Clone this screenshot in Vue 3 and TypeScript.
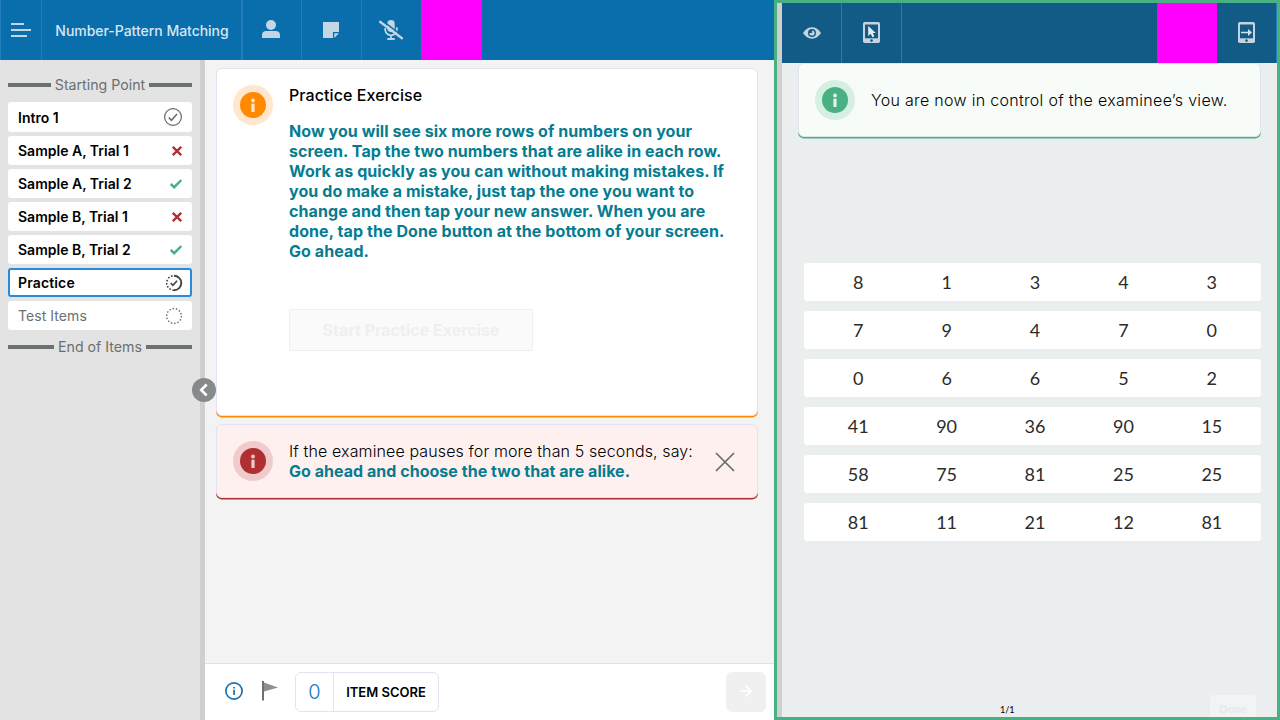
<script setup lang="ts">
interface Step {
  label: string
  state: 'done' | 'wrong' | 'right' | 'current' | 'pending'
}

const steps: Step[] = [
  { label: 'Intro 1', state: 'done' },
  { label: 'Sample A, Trial 1', state: 'wrong' },
  { label: 'Sample A, Trial 2', state: 'right' },
  { label: 'Sample B, Trial 1', state: 'wrong' },
  { label: 'Sample B, Trial 2', state: 'right' },
  { label: 'Practice', state: 'current' },
  { label: 'Test Items', state: 'pending' },
]

const script: string[] = [
  'Now you will see six more rows of numbers on your',
  'screen. Tap the two numbers that are alike in each row.',
  'Work as quickly as you can without making mistakes. If',
  'you do make a mistake, just tap the one you want to',
  'change and then tap your new answer. When you are',
  'done, tap the Done button at the bottom of your screen.',
  'Go ahead.',
]

const rows: number[][] = [
  [8, 1, 3, 4, 3],
  [7, 9, 4, 7, 0],
  [0, 6, 6, 5, 2],
  [41, 90, 36, 90, 15],
  [58, 75, 81, 25, 25],
  [81, 11, 21, 12, 81],
]
</script>

<template>
  <div class="app">
    <div class="examiner">
      <header class="bar">
        <div class="cell menu">
          <svg width="20" height="14" viewBox="0 0 20 14"><path d="M0 1h13M0 7h20M0 13h16" stroke="#c3d6e4" stroke-width="2" /></svg>
        </div>
        <div class="cell title">Number-Pattern Matching</div>
        <div class="cell tool">
          <svg width="18" height="18" viewBox="0 0 18 18" fill="#c3d6e4"><circle cx="9" cy="5" r="5" /><path d="M0 18v-2.6Q0 11 4.4 11h9.2Q18 11 18 15.400V18z" /></svg>
        </div>
        <div class="cell tool note">
          <svg width="16" height="16" viewBox="0 0 16 16" fill="#c3d6e4"><path d="M0 0h16v10h-6v6H0z" /><path d="M11.300 11.300H16L11.300 16z" /></svg>
        </div>
        <div class="cell tool mic">
          <svg width="24" height="20" viewBox="0 0 24 20" fill="none" stroke="#c3d6e4">
            <rect x="8.300" y="0" width="7.400" height="12" rx="3.700" fill="#c3d6e4" stroke="none" />
            <path d="M6.200 8v1.500a5.800 5.800 0 0 0 11.600 0V7.300M12 15v4M8.300 19h7.400" stroke-width="1.800" />
            <path d="M1.500-.8l23 17.500" stroke="#0a6eac" stroke-width="1.500" />
            <path d="M.3 1.200l23.400 17.600" stroke-width="2.300" />
          </svg>
        </div>
        <div class="mask"></div>
      </header>

      <div class="body">
        <aside class="side">
          <div class="rule start"><i></i><span>Starting Point</span><i></i></div>
          <div class="steps">
            <div v-for="s in steps" :key="s.label" class="step" :class="s.state">
              <span>{{ s.label }}</span>
              <svg v-if="s.state === 'done'" width="20" height="20" viewBox="0 0 20 20" fill="none" stroke="#666b6b"><circle cx="10" cy="10" r="8.400" stroke-width="1.200" /><path d="M5.700 10.500l2.800 2.800 5.500-6.200" stroke-width="1.500" /></svg>
              <svg v-else-if="s.state === 'wrong'" width="10" height="10" viewBox="0 0 10 10" fill="none" stroke="#b02f32" stroke-width="2.300"><path d="M.8.8l8.400 8.400M9.200.8L.8 9.200" /></svg>
              <svg v-else-if="s.state === 'right'" width="12" height="10" viewBox="0 0 12 10" fill="none" stroke="#48b083" stroke-width="2.400"><path d="M.7 4.900l3.500 3.300L11.300 1" /></svg>
              <svg v-else-if="s.state === 'current'" width="18" height="18" viewBox="0 0 18 18" fill="none" stroke="#414545"><path d="M9 1.700a7.300 7.300 0 0 1 0 14.600" stroke-width="1.900" /><path d="M9 16.300a7.300 7.300 0 0 1 0-14.600" stroke-width="1.600" stroke-dasharray="1.600 1.680" /><path d="M5.700 9l2.200 2.300 4.200-4.500" stroke-width="1.600" /></svg>
              <svg v-else width="18" height="18" viewBox="0 0 18 18" fill="none" stroke="#707474"><circle cx="9" cy="9" r="7.400" stroke-width="1.500" stroke-dasharray="1.500 1.820" /></svg>
            </div>
          </div>
          <div class="rule end"><i></i><span>End of Items</span><i></i></div>
          <div class="collapse">
            <svg width="10" height="14" viewBox="0 0 10 14"><path d="M7.700 1.500L2.200 7l5.500 5.500" fill="none" stroke="#fff" stroke-width="2.600" /></svg>
          </div>
        </aside>

        <main class="main">
          <section class="card orange">
            <div class="badge"><svg width="26" height="26" viewBox="0 0 26 26"><circle cx="13" cy="13" r="13" fill="#ff8a00" /><g fill="#ffe6cc"><circle cx="13" cy="8.500" r="1.900" /><path d="M11.400 11.700h3.200V20h-3.200z" /></g></svg></div>
            <div class="copy">
              <h1>Practice Exercise</h1>
              <div class="say"><div v-for="line in script" :key="line">{{ line }}</div></div>
              <button class="begin">Start Practice Exercise</button>
            </div>
          </section>
          <section class="card red">
            <div class="badge"><svg width="26" height="26" viewBox="0 0 26 26"><circle cx="13" cy="13" r="13" fill="#b02f32" /><g fill="#efcbcc"><circle cx="13" cy="8.500" r="1.900" /><path d="M11.400 11.700h3.200V20h-3.200z" /></g></svg></div>
            <div class="copy">
              <div class="hint">If the examinee pauses for more than 5 seconds, say:</div>
              <div class="say short">Go ahead and choose the two that are alike.</div>
            </div>
            <svg class="close" width="20" height="20" viewBox="0 0 20 20"><path d="M1 1l18 18M19 1L1 19" stroke="#666b6b" stroke-width="1.700" /></svg>
          </section>
          <footer class="foot">
            <svg class="info" width="18" height="18" viewBox="0 0 18 18"><circle cx="9" cy="9" r="8.100" fill="none" stroke="#1d6fad" stroke-width="1.700" /><path d="M8.200 7.700h1.700V13H8.200zM8.200 5h1.700v1.600H8.200z" fill="#1d6fad" /></svg>
            <svg class="flag" width="16" height="20" viewBox="0 0 16 20"><path d="M2 1.500L16 6.500 2 10.500z" fill="#8d9090" /><path d="M1 0v19.500" stroke="#666b6b" stroke-width="1.900" /></svg>
            <div class="score"><span class="val">0</span><span class="cap">ITEM SCORE</span></div>
            <div class="next"><svg width="12" height="12" viewBox="0 0 12 12"><path d="M0 6h11M5.500.6L11 6l-5.500 5.400" fill="none" stroke="#fff" stroke-width="1.700" /></svg></div>
          </footer>
        </main>
      </div>
    </div>

    <div class="examinee">
      <div class="gutter"></div>
      <div class="view">
        <header class="bar dark">
          <div class="cell eye">
            <svg width="18" height="12" viewBox="0 0 18 12"><path d="M0 6Q3.500.3 9 .3T18 6Q14.500 11.700 9 11.700T0 6z" fill="#c3d3df" /><circle cx="9" cy="6" r="4" fill="#135b87" /><circle cx="9" cy="6" r="2.600" fill="#c3d3df" /><path d="M9 3v3H6V3z" fill="#135b87" /></svg>
          </div>
          <div class="cell tab">
            <svg width="18" height="22" viewBox="0 0 18 22"><rect x="0" y="0" width="17" height="21" rx="1.700" fill="#c3d3df" /><path d="M2 2.500h13v13.800H2z" fill="#135b87" /><circle cx="8.500" cy="18.600" r="1.300" fill="#135b87" /><path d="M5.200 4v10l2.500-2.300 1.700 3.500 2-1-1.600-3.300h3z" fill="#e5edf3" /></svg>
          </div>
          <div class="space"></div>
          <div class="mask"></div>
          <div class="cell send">
            <svg width="18" height="22" viewBox="0 0 18 22"><rect x="0" y="0" width="17" height="21" rx="1.700" fill="#c3d3df" /><path d="M2 2.500h13v13.800H2z" fill="#135b87" /><circle cx="8.500" cy="18.600" r="1.300" fill="#135b87" /><path d="M3 9.700h8v1.600H3zM10 7l4 3.500-4 3.500z" fill="#d5e2eb" /></svg>
          </div>
        </header>
        <section class="card green">
          <div class="badge"><svg width="26" height="26" viewBox="0 0 26 26"><circle cx="13" cy="13" r="13" fill="#48b083" /><g fill="#e4f4ec"><circle cx="13" cy="8.500" r="1.900" /><path d="M11.400 11.700h3.200V20h-3.200z" /></g></svg></div>
          <div class="notice">You are now in control of the examinee’s view.</div>
        </section>
        <div class="grid">
          <div v-for="(r, i) in rows" :key="i" class="row"><span v-for="(n, j) in r" :key="j">{{ n }}</span></div>
        </div>
        <div class="page">
          <span class="count">1/1</span>
          <span class="finish">Done</span>
        </div>
      </div>
    </div>
  </div>
</template>

<style>
html, body { margin: 0; overflow: hidden; }
</style>

<style scoped>
* { box-sizing: border-box; }
.app { display: flex; width: 1280px; height: 720px; overflow: hidden; font-family: Inter, "Liberation Sans", sans-serif; color: #000; white-space: nowrap; }
svg { display: block; flex: none; }
.examiner { width: 774px; display: flex; flex-direction: column; }
.bar { display: flex; height: 60px; flex: none; background: #0a6eac; }
.cell { display: flex; justify-content: center; align-items: center; border-right: 1px solid #237eb7; }
.menu { width: 42px; border-left: 1px solid #237eb7; }
.title { width: 201px; border-right-width: 2px; font-size: 14px; font-weight: 500; color: #d6e6f1; letter-spacing: -.03px; padding: 1px 0 0 1px; }
.tool { width: 59px; padding-right: 2px; }
.tool.note, .tool.mic { width: 60px; }
.bar .title + .tool svg { margin-top: -2px; }
.mask { width: 60px; background: #f0f; }
.body { display: flex; height: 660px; }
.side { position: relative; width: 205px; background: #e3e3e3; border-right: 5px solid #cfcfcf; padding: 16px 8px 0; }
.rule { display: flex; align-items: center; gap: 4px; height: 18px; font-size: 14.200px; color: #6b7070; line-height: 18px; }
.rule i { flex: 1; height: 4px; background: #6b7070; }
.steps { display: flex; flex-direction: column; gap: 4px; margin: 8px 0; }
.step { display: flex; align-items: center; justify-content: space-between; height: 29px; padding: 0 10px; background: #fff; border-radius: 3px; font-size: 14px; font-weight: 600; }
.step.done { height: 30px; padding-right: 9px; }
.step.current { border: 2px solid #278bdd; padding: 0 7px 0 8px; letter-spacing: .14px; }
.step.pending { font-weight: 400; color: #6b7070; padding-right: 9px; letter-spacing: .06px; }
.collapse { position: absolute; left: 192px; top: 318px; width: 24px; height: 24px; border-radius: 50%; background: #868a8a; display: flex; align-items: center; justify-content: center; }
.main { width: 569px; background: #f3f3f3; display: flex; flex-direction: column; padding-top: 8px; }
.card { display: flex; border: 1px solid #e1e4f0; border-radius: 6px; background: #fff; }
.main .card { width: 542px; margin-left: 11px; }
.badge { width: 40px; height: 40px; flex: none; border-radius: 50%; display: flex; align-items: center; justify-content: center; }
.orange { height: 348px; box-shadow: 0 1.500px 0 #ff8a00; padding: 16px; }
.orange .badge { background: #ffe6cc; }
.copy { margin-left: 16px; }
h1 { margin: 0 0 16px; font-size: 16px; line-height: 20px; font-weight: 500; letter-spacing: .08px; }
.say { font-size: 16px; line-height: 20px; font-weight: 700; color: #067c91; letter-spacing: .08px; }
.say.short { letter-spacing: .03px; }
.begin { display: block; margin-top: 48px; width: 244px; height: 42px; border: 1px solid #efefef; border-radius: 2px; background: #fafafa; color: #efefef; font: 700 16px Inter, sans-serif; padding: 0; }
.red { height: 74px; margin-top: 8px; background: #fff0f0; box-shadow: 0 1.500px 0 #b02f32; padding: 16px; }
.red .badge { background: #efcbcc; }
.hint { font-size: 16px; line-height: 20px; font-weight: 300; letter-spacing: .12px; }
.close { margin: 11px 0 0 22px; }
.foot { display: flex; align-items: center; height: 57px; margin-top: auto; background: #fff; border-top: 1px solid #e0e0e0; padding: 0 8px 0 20px; }
.info { margin-top: -2px; }
.flag { margin: -2px 0 0 19px; }
.score { display: flex; width: 144px; height: 40px; margin-left: 17px; border: 1px solid #e1e4f0; border-radius: 6px; }
.val { width: 38px; border-right: 1px solid #e1e4f0; font-size: 20px; font-weight: 300; color: #1678c8; text-align: center; line-height: 38px; }
.cap { flex: 1; font-size: 13px; font-weight: 600; text-align: center; line-height: 39px; }
.next { width: 40px; height: 40px; margin-left: auto; border-radius: 6px; background: #f0f0f0; display: flex; align-items: center; justify-content: center; }
.next svg { margin-top: -2px; }
.examinee { width: 506px; border: 3px solid #48b083; display: flex; }
.gutter { width: 5px; background: #cfcfcf; }
.view { width: 495px; background: #eaeeef; display: flex; flex-direction: column; overflow: hidden; }
.bar.dark { background: #135b87; }
.dark .cell { width: 60px; }
.space { flex: 1; }
.green { width: 463px; height: 74px; margin-left: 16px; background: #f7fcf9; box-shadow: 0 1.500px 0 #48b083; padding: 16px; flex: none; }
.green .badge { background: #d6efe3; }
.notice { font-size: 16px; font-weight: 300; line-height: 40px; margin-left: 16px; letter-spacing: .3px; }
.grid { display: flex; flex-direction: column; gap: 10px; margin: 126px 16px 0 22px; }
.row { display: flex; height: 38px; background: #fff; border-radius: 3px; padding: 0 5px 0 10px; }
.row span { flex: 1; text-align: center; color: #2b2b2b; font: 400 18px/38px Lato, sans-serif; }
.page { position: relative; flex: 1; }
.count { position: absolute; left: 218px; bottom: 0; font: 9px/14px Lato, sans-serif; }
.finish { position: absolute; left: 428px; bottom: -6px; width: 46px; height: 28px; border-radius: 3px; background: #f1f3f4; color: #e7e9eb; font: 700 11.500px/28px Lato, sans-serif; text-align: center; }
</style>
